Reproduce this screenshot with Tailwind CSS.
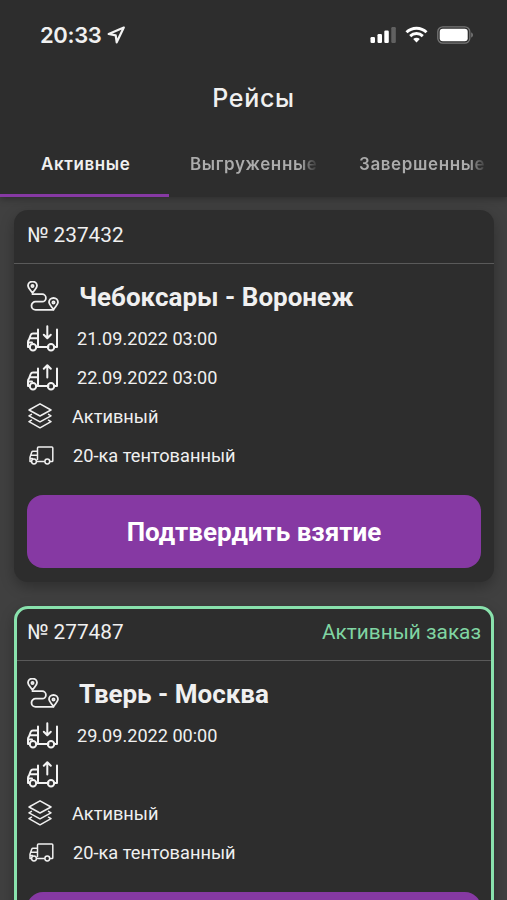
<!DOCTYPE html>
<html lang="ru">
<head>
<meta charset="utf-8">
<title>Рейсы</title>
<script src="https://cdn.jsdelivr.net/npm/@tailwindcss/browser@4"></script>
</head>
<body class="bg-[#404040]">
<svg class="hidden">
  <symbol id="route" viewBox="0 0 32 30"><g fill="none" stroke="#f0f0f0" stroke-width="1.800" stroke-linejoin="round" stroke-linecap="round"><path d="M5.500 12C3 8.500 1 7 1 4.800a4.500 4.300 0 0 1 9 0C10 7 8 8.500 5.500 12Z"/><circle cx="5.500" cy="5" r="1.100"/><path d="M26.500 28.500C24 25 22 23.500 22 21.300a4.500 4.300 0 0 1 9 0C31 23.500 29 25 26.500 28.500Z"/><circle cx="26.500" cy="21.500" r="1.100"/><path d="M5.500 13.200H15.200a3.700 3.700 0 0 1 0 7.400H8.600a4.100 4.100 0 0 0 0 8.200H26.500"/></g></symbol>
  <symbol id="load" viewBox="0 0 32 27"><g fill="none" stroke="#f3f3f3" stroke-width="2" stroke-linejoin="round" stroke-linecap="round"><path d="M11 4.500V20.500M11 8.500H6Q4.300 8.500 3.700 10L2 14.500Q1 15.500 1 17V22H2.500M3 13.300H11M1.500 17.500H5M9.500 22H21.500M27.500 22H30V4.500"/><circle cx="6" cy="22.300" r="3.200"/><circle cx="24" cy="22.300" r="3.200"/><path d="M20.300 1.200V12.500M16.800 9.700L20.300 13.200L23.800 9.700"/></g></symbol>
  <symbol id="unload" viewBox="0 0 32 27"><g fill="none" stroke="#f3f3f3" stroke-width="2" stroke-linejoin="round" stroke-linecap="round"><path d="M11 4.500V20.500M11 8.500H6Q4.300 8.500 3.700 10L2 14.500Q1 15.500 1 17V22H2.500M3 13.300H11M1.500 17.500H5M9.500 22H21.500M27.500 22H30V4.500"/><circle cx="6" cy="22.300" r="3.200"/><circle cx="24" cy="22.300" r="3.200"/><path d="M20.300 13.500V1.500M16.800 4.700L20.300 1.200L23.800 4.700"/></g></symbol>
  <symbol id="layers" viewBox="0 0 24 26"><g fill="none" stroke="#f0f0f0" stroke-width="1.500" stroke-linejoin="round" stroke-linecap="round"><path d="M12 .8L23 7L12 13L1 7Z"/><path d="M3.500 11.300L1 12.800L12 18.800L23 12.800L20.500 11.300"/><path d="M3.500 17.200L1 18.700L12 24.800L23 18.700L20.500 17.200"/></g></symbol>
  <symbol id="truck" viewBox="0 0 25 19"><g fill="none" stroke="#f0f0f0" stroke-width="1.500" stroke-linejoin="round" stroke-linecap="round"><path d="M8.500 13.500V2Q8.500 1 9.500 1H22.800Q23.800 1 23.800 2V14.700Q23.800 15.500 23 15.500H21.200M15.300 15.500H7.800M2 15.500H1V11.300L2.800 6Q3.100 5.200 4 5.200H8.500M2 9.200H8.500M1 12.400H3.500"/><circle cx="5" cy="15.500" r="2.400"/><circle cx="18.300" cy="15.500" r="2.400"/></g></symbol>
</svg>
<div class="w-[507px] h-[900px] overflow-hidden flex flex-col bg-[#404040] text-[#f0f0f0] font-['Roboto',sans-serif]">
  <header class="relative z-10 h-[197px] shrink-0 bg-[#2d2d2d] shadow-[0_2px_7px_rgba(0,0,0,0.3)] flex flex-col font-['Inter',sans-serif]">
    <div class="h-[69px] pl-[40px] pr-[34px] flex items-center">
      <span class="text-[22px] leading-[30px] font-semibold tracking-[-0.35px]">20:33</span>
      <svg class="ml-[6px] w-[19px] h-[18px]" viewBox="0 0 19 18" fill="none" stroke="#f3f3f3" stroke-width="2.200" stroke-linejoin="round"><path d="M16.800 1.500L1.700 8L8.700 9.300L9.700 16.300Z"/></svg>
      <svg class="ml-auto w-[26px] h-[18px]" viewBox="0 0 26 18"><g fill="#fff"><rect x="0.500" y="11" width="4.500" height="6" rx="1.200"/><rect x="7.500" y="8" width="4.500" height="9" rx="1.200"/><rect x="14.300" y="4.500" width="4.500" height="12.500" rx="1.200"/><rect x="21.300" y="1" width="4.500" height="16" rx="1.200" opacity=".25"/></g></svg>
      <svg class="ml-[9px] w-[23px] h-[17px]" viewBox="0 0 22 17" fill="none" stroke="#fff" stroke-width="2.900"><path d="M1 6.300C6.500.8 15.500.8 21 6.300"/><path d="M4.700 10.100C8.200 6.700 13.800 6.700 17.300 10.100"/><path d="M11 16.500L7.700 13.100C9.600 11.400 12.400 11.400 14.300 13.100Z" fill="#fff" stroke="none"/></svg>
      <svg class="ml-[9px] w-[36px] h-[18px]" viewBox="0 0 36 18"><rect x=".8" y=".8" width="32" height="16.400" rx="5" fill="none" stroke="#777" stroke-width="1.300"/><rect x="2.700" y="2.700" width="28" height="12.600" rx="3" fill="#fff"/><path d="M34.200 6.300Q36 7.200 36 9T34.200 11.700Z" fill="#777"/></svg>
    </div>
    <h1 class="h-[60px] flex items-center justify-center text-[25px] font-medium tracking-[0.7px]">Рейсы</h1>
    <nav class="flex-1 grid grid-cols-3 text-[17px] font-semibold tracking-[0.6px] whitespace-nowrap">
      <div class="border-b-[3px] border-[#8639a3] pl-[41px] pt-[22px] leading-[26px]">Активные</div>
      <div class="pl-[21px] pt-[22px] leading-[26px]"><div class="w-[129px] overflow-hidden bg-clip-text text-transparent bg-linear-to-r from-[#acacac] from-85% to-[#2d2d2d]">Выгруженные</div></div>
      <div class="pl-[21px] pt-[22px] leading-[26px]"><div class="w-[129px] overflow-hidden bg-clip-text text-transparent bg-linear-to-r from-[#acacac] from-85% to-[#2d2d2d]">Завершенные</div></div>
    </nav>
  </header>
  <main class="pt-[13px] px-[14px] w-[508px] flex flex-col gap-[24px]">
    <article class="h-[372px] shrink-0 rounded-[14px] bg-[#2d2d2d] shadow-[0_5px_14px_rgba(0,0,0,0.28)]">
      <div class="h-[54px] border-b border-[#5a5a5a] px-[13px] flex items-center justify-between text-[20.8px] pb-[1px]"><span>№ 237432</span></div>
      <div class="px-[13px] pt-[12px]">
        <div class="h-[43px] flex items-center"><svg class="w-[32px] h-[30px] mr-[20px] mb-[3px]"><use href="#route"/></svg><b class="text-[26px] font-bold">Чебоксары - Воронеж</b></div>
        <div class="h-[39px] flex items-center text-[18.1px]"><svg class="w-[32px] h-[27px] mr-[18px] mb-[1px]"><use href="#load"/></svg>21.09.2022 03:00</div>
        <div class="h-[39px] flex items-center text-[18.1px]"><svg class="w-[32px] h-[27px] mr-[18px] mb-[1px]"><use href="#unload"/></svg>22.09.2022 03:00</div>
        <div class="h-[39px] flex items-center text-[18.2px]"><svg class="w-[24px] h-[26px] ml-[1px] mr-[20px] mb-[2px]"><use href="#layers"/></svg>Активный</div>
        <div class="h-[39px] flex items-center text-[18.2px]"><svg class="w-[25px] h-[19px] ml-[2px] mr-[19px]"><use href="#truck"/></svg>20-ка тентованный</div>
        <button class="mt-[20px] block w-[454px] h-[73px] rounded-[16px] bg-[#8639a3] text-white text-[26px] font-bold pt-[2px]">Подтвердить взятие</button>
      </div>
    </article>
    <article class="h-[374px] shrink-0 rounded-[14px] border-[3px] border-[#89e2ad] bg-[#2d2d2d] shadow-[0_5px_14px_rgba(0,0,0,0.28)]">
      <div class="h-[52px] border-b border-[#5a5a5a] px-[10px] flex items-center justify-between text-[20.8px] pb-[3px]"><span>№ 277487</span><span class="text-[#80d5a2]">Активный заказ</span></div>
      <div class="px-[10px] pt-[12px]">
        <div class="h-[43px] flex items-center"><svg class="w-[32px] h-[30px] mr-[20px] mb-[3px]"><use href="#route"/></svg><b class="text-[26px] font-bold">Тверь - Москва</b></div>
        <div class="h-[39px] flex items-center text-[18.1px]"><svg class="w-[32px] h-[27px] mr-[18px] mb-[1px]"><use href="#load"/></svg>29.09.2022 00:00</div>
        <div class="h-[39px] flex items-center text-[18.1px]"><svg class="w-[32px] h-[27px] mr-[18px] mb-[1px]"><use href="#unload"/></svg></div>
        <div class="h-[39px] flex items-center text-[18.2px]"><svg class="w-[24px] h-[26px] ml-[1px] mr-[20px] mb-[2px]"><use href="#layers"/></svg>Активный</div>
        <div class="h-[39px] flex items-center text-[18.2px]"><svg class="w-[25px] h-[19px] ml-[2px] mr-[19px]"><use href="#truck"/></svg>20-ка тентованный</div>
        <button class="mt-[20px] block w-[454px] h-[73px] rounded-[16px] bg-[#8639a3]"></button>
      </div>
    </article>
  </main>
</div>
</body>
</html>
